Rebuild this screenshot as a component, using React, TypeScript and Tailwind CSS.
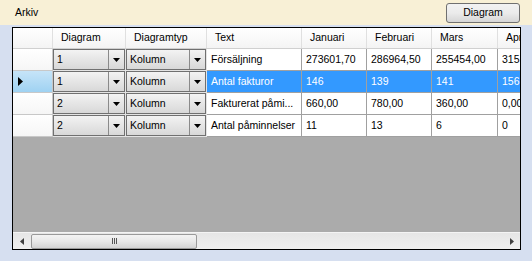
import React from "react";

const font = { fontFamily: '"Liberation Sans", Arial, sans-serif' };

type Row = { d: string; t: string; text: string; vals: string[]; sel?: boolean };

const rows: Row[] = [
  { d: "1", t: "Kolumn", text: "Försäljning", vals: ["273601,70", "286964,50", "255454,00", "315"] },
  { d: "1", t: "Kolumn", text: "Antal fakturor", vals: ["146", "139", "141", "156"], sel: true },
  { d: "2", t: "Kolumn", text: "Fakturerat påmi...", vals: ["660,00", "780,00", "360,00", "0,00"] },
  { d: "2", t: "Kolumn", text: "Antal påminnelser", vals: ["11", "13", "6", "0"] },
];

function Combo({ value, w }: { value: string; w: string }) {
  return (
    <div className={`${w} h-[22px] shrink-0 border-r border-b border-[#e4e4e4] relative`}>
      <div className="absolute inset-0 border border-[#707070] bg-gradient-to-b from-[#f3f3f3] to-[#d8d8d8] flex items-center">
        <span className="pl-[3px] flex-1 text-[10.5px] leading-none text-black whitespace-nowrap">{value}</span>
        <div className="w-[16px] h-full border-l border-[#8a8a8a] flex items-center justify-center">
          <svg width="7" height="4" viewBox="0 0 7 4">
            <polygon points="0,0 7,0 3.5,4" fill="#000" />
          </svg>
        </div>
      </div>
    </div>
  );
}

function Cell({ v, w, sel }: { v: string; w: string; sel?: boolean }) {
  return (
    <div
      className={`${w} h-[22px] shrink-0 border-r border-b border-[#a0a0a0] flex items-center pl-[4px] overflow-hidden whitespace-nowrap text-[10.5px] ${
        sel ? "bg-[#3399ff] text-white" : "bg-white text-black"
      }`}
    >
      {v}
    </div>
  );
}

function Head({ v, w }: { v: string; w: string }) {
  return (
    <div className={`${w} h-[20px] shrink-0 border-r border-[#e0e0e0] flex items-center pl-[8px] overflow-hidden whitespace-nowrap text-[10.5px] text-black bg-gradient-to-b from-[#ffffff] to-[#f4f4f4]`}>
      {v}
    </div>
  );
}

export default function App() {
  return (
    <div className="w-[532px] h-[261px] bg-[#d6dff0] flex flex-col overflow-hidden" style={font}>
      <div className="h-[25px] bg-[#f8f0d6] flex items-center justify-between pl-[15px] pr-[12px] shrink-0">
        <span className="text-[10.5px] text-black">Arkiv</span>
        <button className="w-[74px] h-[20px] mt-[1px] rounded-[3px] border border-[#707070] bg-gradient-to-b from-[#f2f2f2] via-[#ebebeb] to-[#d6d6d6] text-[10.5px] text-black flex items-center justify-center">
          Diagram
        </button>
      </div>
      <div className="pl-[12px] pt-[2px]">
        <div className="w-[509px] h-[223px] border border-black bg-[#ababab] flex flex-col overflow-hidden">
          <div className="flex-1 overflow-hidden">
            <div className="flex border-b border-[#d0d0d0] bg-white w-max">
              <div className="w-[40px] h-[20px] shrink-0 border-r border-[#e0e0e0] bg-gradient-to-b from-[#ffffff] to-[#f4f4f4]" />
              <Head v="Diagram" w="w-[73px]" />
              <Head v="Diagramtyp" w="w-[81px]" />
              <Head v="Text" w="w-[95px]" />
              <Head v="Januari" w="w-[65px]" />
              <Head v="Februari" w="w-[65px]" />
              <Head v="Mars" w="w-[66px]" />
              <Head v="April" w="w-[60px]" />
            </div>
            {rows.map((r, i) => (
              <div key={i} className="flex w-max">
                <div
                  className={`w-[40px] h-[22px] shrink-0 border-r border-b border-[#c8c8c8] flex items-center pl-[5px] ${
                    r.sel ? "bg-gradient-to-b from-[#c6e4f8] to-[#9fd2f2]" : "bg-gradient-to-b from-[#ffffff] to-[#f6f6f6]"
                  }`}
                >
                  {r.sel && (
                    <svg width="5" height="9" viewBox="0 0 5 9">
                      <polygon points="0,0 5,4.5 0,9" fill="#000" />
                    </svg>
                  )}
                </div>
                <Combo value={r.d} w="w-[73px]" />
                <Combo value={r.t} w="w-[81px]" />
                <Cell v={r.text} w="w-[95px]" sel={r.sel} />
                <Cell v={r.vals[0]} w="w-[65px]" sel={r.sel} />
                <Cell v={r.vals[1]} w="w-[65px]" sel={r.sel} />
                <Cell v={r.vals[2]} w="w-[66px]" sel={r.sel} />
                <Cell v={r.vals[3]} w="w-[60px]" sel={r.sel} />
              </div>
            ))}
          </div>
          <div className="h-[17px] shrink-0 bg-gradient-to-b from-[#e6e6e6] to-[#efefef] border-t border-[#f4f4f4] flex items-center">
            <div className="w-[18px] h-full flex items-center justify-center">
              <svg width="4" height="7" viewBox="0 0 4 7">
                <polygon points="4,0 0,3.5 4,7" fill="#404040" />
              </svg>
            </div>
            <div className="w-[166px] h-[15px] rounded-[2px] border border-[#9a9a9a] bg-gradient-to-b from-[#f4f4f4] via-[#e8e8e8] to-[#d4d4d4] flex items-center justify-center gap-[1px]">
              <div className="w-[1px] h-[6px] bg-[#555]" />
              <div className="w-[1px] h-[6px] bg-[#555]" />
              <div className="w-[1px] h-[6px] bg-[#555]" />
            </div>
            <div className="flex-1" />
            <div className="w-[17px] h-full flex items-center justify-center">
              <svg width="4" height="7" viewBox="0 0 4 7">
                <polygon points="0,0 4,3.5 0,7" fill="#404040" />
              </svg>
            </div>
          </div>
        </div>
      </div>
    </div>
  );
}
